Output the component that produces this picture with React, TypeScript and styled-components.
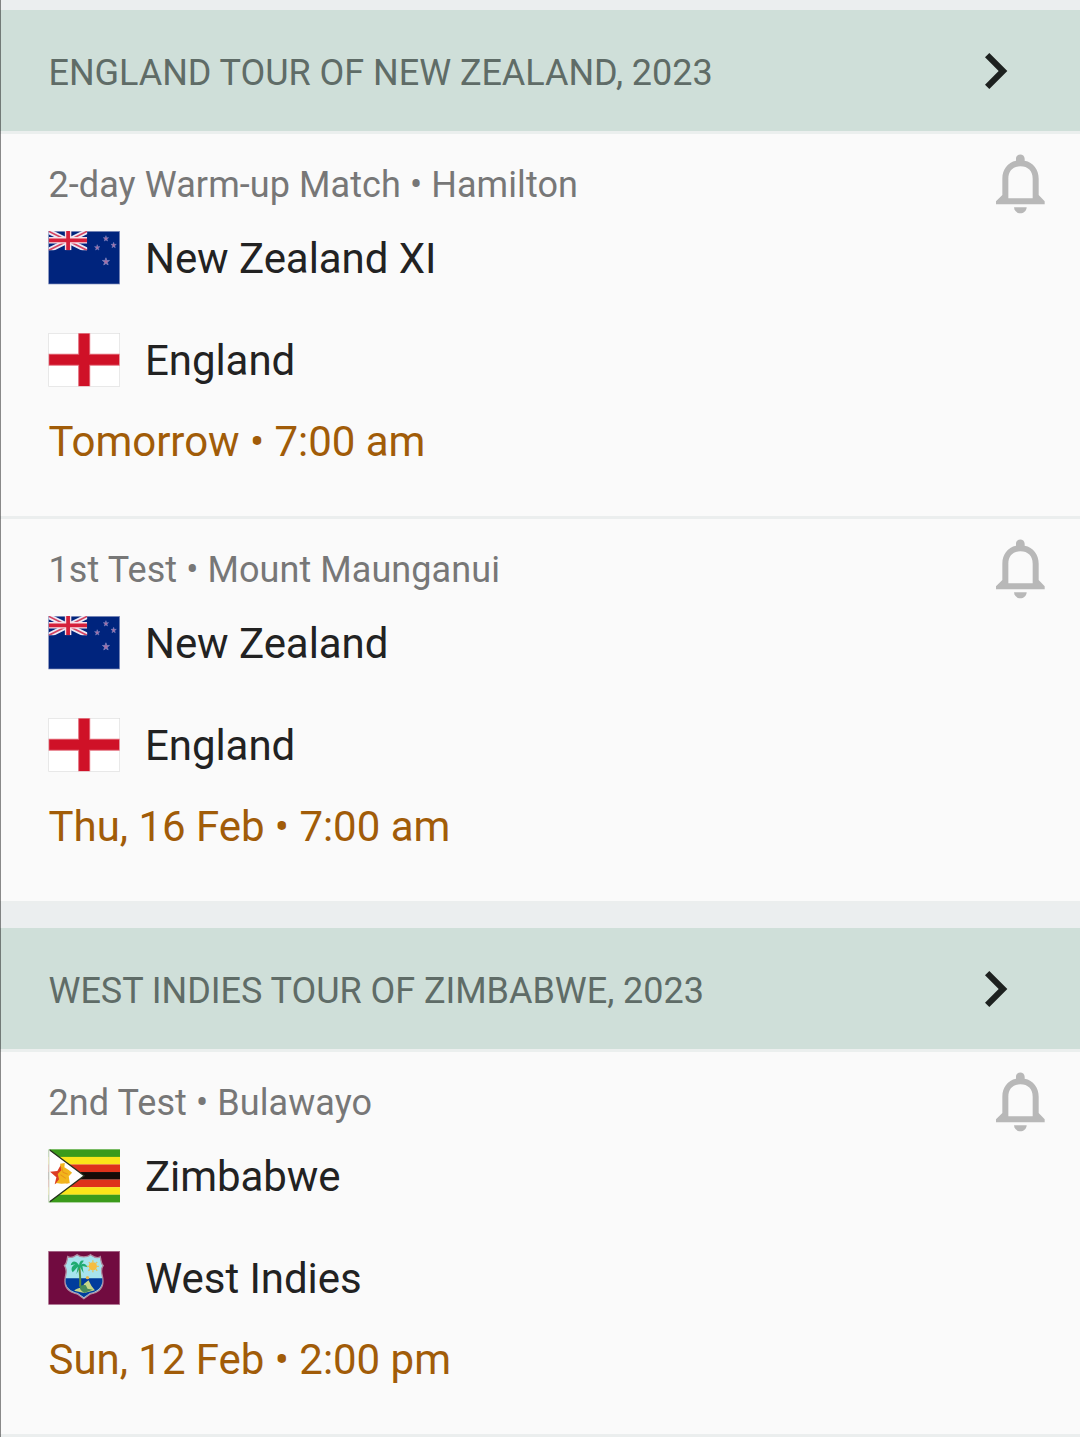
import React from "react";
import styled, { createGlobalStyle } from "styled-components";

const GlobalStyle = createGlobalStyle`
  *, *::before { box-sizing: border-box; }
  body { margin: 0; background: #fafafa; font-family: Roboto, "Noto Sans", sans-serif; }
  svg { display: block; flex: none; }
`;

const Page = styled.main`
  position: relative;
  height: 1437px;
  overflow: hidden;
  padding-top: 10px;
  background: #ebeeef;
  &::before {
    content: "";
    position: absolute;
    z-index: 1;
    top: 0;
    bottom: 0;
    left: 0;
    width: 1px;
    background: rgba(0, 0, 0, 0.45);
  }
`;

const Series = styled.section`
  margin-bottom: 24px;
`;

const SeriesHeader = styled.header`
  display: flex;
  align-items: center;
  justify-content: space-between;
  height: 124px;
  padding: 0 72px 0 48.5px;
  border-bottom: 3px solid #ebefee;
  background: #cfdfd9;
`;

const SeriesTitle = styled.h2`
  margin: 0;
  padding-top: 5px;
  font-size: 36px;
  line-height: 42px;
  font-weight: 400;
  letter-spacing: -0.04px;
  color: #5f6c67;
  white-space: nowrap;
`;

const Match = styled.article`
  display: flex;
  justify-content: space-between;
  height: 385px;
  padding: 20px 34px 0 48px;
  border-bottom: 3px solid #ebeeee;
  background: #fafafa;
`;

const MatchBody = styled.div`
  display: flex;
  flex-direction: column;
  padding-top: 10px;
  white-space: nowrap;
`;

const Venue = styled.div`
  height: 42px;
  padding-left: 0.5px;
  font-size: 36px;
  line-height: 42px;
  letter-spacing: 0.08px;
  color: #777;
`;

const Teams = styled.div`
  display: grid;
  grid-auto-rows: 54px;
  row-gap: 48px;
  margin-top: 25px;
`;

const Team = styled.div`
  display: flex;
  align-items: center;
  gap: 25px;
`;

const TeamName = styled.span`
  padding-top: 2px;
  font-size: 42px;
  line-height: 50px;
  letter-spacing: -0.06px;
  color: #222;
`;

const StartTime = styled.time`
  margin-top: 30px;
  padding-left: 0.5px;
  font-size: 42px;
  line-height: 50px;
  letter-spacing: -0.03px;
  color: #a15c08;
`;

function Chevron() {
  return (
    <svg width="23" height="36" viewBox="15 39 69 108">
      <path d="M15 52 28 39 82 93 28 147 15 134 56 93Z" fill="#1d211f" />
    </svg>
  );
}

function Bell() {
  return (
    <svg width="50" height="60" viewBox="48 341 150 180">
      <path
        fill="#b8b8b8"
        fillRule="evenodd"
        d="M108 361V355C108 338 134 338 134 355V361C160 366 176 387 176 415V464L194 483V492H48V483L67 464V415C67 387 83 366 108 361ZM85 474H158V415C158 392 144 378 121 378C99 378 85 392 85 415Z"
      />
      <path fill="#b8b8b8" d="M102 501H140C138 525 104 525 102 501Z" />
    </svg>
  );
}

function NewZealandFlag() {
  return (
    <svg width="72" height="54" viewBox="-2 0 215 162" preserveAspectRatio="none">
      <rect x="0" y="1" width="212" height="158" fill="#00247d" stroke="#8590bd" strokeWidth="2" />
      <svg width="115" height="58" viewBox="0 0 113 56" preserveAspectRatio="none">
        <path d="M0 1 113 56M113 1 0 56" stroke="#eceaf5" strokeWidth="15" />
        <path d="M0 1 113 56M113 1 0 56" stroke="#d54562" strokeWidth="5" />
        <path d="M57 0V56M0 27H113" stroke="#f7dfe7" strokeWidth="19" />
        <path d="M57 0V56M0 27H113" stroke="#d5203b" strokeWidth="11" />
      </svg>
      {[[171, 22, 6], [145, 49, 6], [194, 42, 6], [171, 91, 8]].map(([x, y, r]) => (
        <g key={`${x}-${y}`} transform={`translate(${x} ${y}) scale(${r / 6})`}>
          <path d="M0-8 2-2 8-2 3 2 5 8 0 5-5 8-3 2-8-2-2-2Z" fill="#a86fa6" stroke="#7f8ac4" strokeWidth="1.5" />
        </g>
      ))}
    </svg>
  );
}

function EnglandFlag() {
  return (
    <svg width="72" height="54" viewBox="-2 0 215 162" preserveAspectRatio="none">
      <rect x="0" y="1" width="212" height="159" fill="#fff" stroke="#dedede" strokeWidth="2" />
      <path d="M106 1V160M0 80H212" stroke="#e36b7a" strokeWidth="36" />
      <path d="M106 2V159M2 80H210" stroke="#cf1127" strokeWidth="30" />
    </svg>
  );
}

function ZimbabweFlag() {
  const stripes = ["#3b9b1b", "#fbe51a", "#de321b", "#160b08", "#de321b", "#fbe51a", "#3b9b1b"];
  return (
    <svg width="72" height="54" viewBox="-2 0 215 162" preserveAspectRatio="none">
      {stripes.map((fill, i) => (
        <rect key={i} y={1 + i * 22.7} width="213" height="23" fill={fill} />
      ))}
      <path d="M0 1 106 80 0 160Z" fill="#fff" />
      <path d="M3 3 106 80 3 158" fill="none" stroke="#26301e" strokeWidth="4" />
      <path d="M1 3V158" stroke="#bfc4b6" strokeWidth="2" />
      <path d="M36 48 46 66 66 69 51 83 56 104 37 94 18 106 23 85 4 68 26 66Z" fill="#dc3c23" />
      <path d="M34 44 48 42 47 55 60 63 70 71 60 82 63 103 38 104 22 102 31 91 27 75 38 64Z" fill="#f2b51d" />
      <path d="M39 54 43 70 57 76M35 77 51 88" fill="none" stroke="#e8921c" strokeWidth="3" />
    </svg>
  );
}

function WestIndiesFlag() {
  return (
    <svg width="72" height="54" viewBox="-2 0 215 162" preserveAspectRatio="none">
      <rect x="0" y="1" width="212" height="159" fill="#710b40" stroke="#a46484" strokeWidth="2" />
      <path
        d="M57 17C68 24 79 15 85 11C95 20 115 20 125 11C132 16 143 25 154 17C157 28 155 37 163 44C151 58 162 70 162 88C164 116 141 127 124 129L105 143 86 129C66 125 46 115 49 86C49 69 59 59 47 44C56 36 54 28 57 17Z"
        fill="#a7e4ed"
        stroke="#b18ba1"
        strokeWidth="4"
      />
      <path d="M51 82H160C164 111 140 124 123 126L105 139 87 126C65 121 47 109 51 82Z" fill="#003c9c" />
      <path d="M76 119C88 108 101 112 106 98L119 88 128 105 138 118 106 126Z" fill="#c5d587" />
      <path d="M98 119C88 109 96 98 111 103L116 113 132 116 106 126Z" fill="#468b5c" />
      <path d="M91 46Q95 71 94 107" fill="none" stroke="#5f8c3c" strokeWidth="6" />
      <path d="M91 43C78 24 67 33 66 43L80 40C65 46 67 59 72 64L87 47 83 69 94 49 104 66 101 45 116 49C113 39 103 36 97 41L105 29C96 26 91 33 91 43Z" fill="#1fab70" />
      <circle cx="132" cy="46" r="12" fill="#f5bd3f" />
      <path d="M132 28V34M132 58V64M114 46H120M144 46H150M120 34 123 37M141 55 145 59M119 59 123 55M141 37 145 33" stroke="#e3c35c" strokeWidth="4" />
      <circle cx="116" cy="80" r="5" fill="#e7b74f" />
    </svg>
  );
}

const flags = {
  "New Zealand XI": NewZealandFlag,
  "New Zealand": NewZealandFlag,
  England: EnglandFlag,
  Zimbabwe: ZimbabweFlag,
  "West Indies": WestIndiesFlag,
};

type TeamId = keyof typeof flags;
type Fixture = { venue: string; teams: TeamId[]; time: string };

const series: { title: string; fixtures: Fixture[] }[] = [
  {
    title: "ENGLAND TOUR OF NEW ZEALAND, 2023",
    fixtures: [
      { venue: "2-day Warm-up Match • Hamilton", teams: ["New Zealand XI", "England"], time: "Tomorrow • 7:00 am" },
      { venue: "1st Test • Mount Maunganui", teams: ["New Zealand", "England"], time: "Thu, 16 Feb • 7:00 am" },
    ],
  },
  {
    title: "WEST INDIES TOUR OF ZIMBABWE, 2023",
    fixtures: [{ venue: "2nd Test • Bulawayo", teams: ["Zimbabwe", "West Indies"], time: "Sun, 12 Feb • 2:00 pm" }],
  },
];

export default function App() {
  return (
    <Page>
      <GlobalStyle />
      {series.map(({ title, fixtures }) => (
        <Series key={title}>
          <SeriesHeader>
            <SeriesTitle>{title}</SeriesTitle>
            <Chevron />
          </SeriesHeader>
          {fixtures.map(({ venue, teams, time }) => (
            <Match key={venue}>
              <MatchBody>
                <Venue>{venue}</Venue>
                <Teams>
                  {teams.map((name) => {
                    const Flag = flags[name];
                    return (
                      <Team key={name}>
                        <Flag />
                        <TeamName>{name}</TeamName>
                      </Team>
                    );
                  })}
                </Teams>
                <StartTime>{time}</StartTime>
              </MatchBody>
              <Bell />
            </Match>
          ))}
        </Series>
      ))}
    </Page>
  );
}
